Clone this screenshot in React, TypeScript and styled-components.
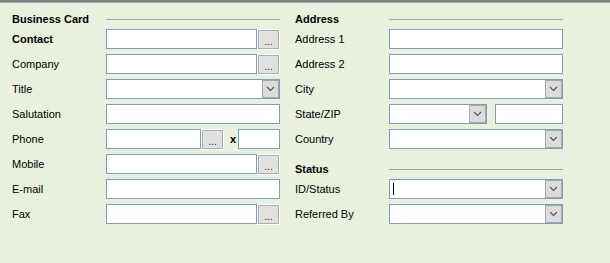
import styled, { createGlobalStyle } from 'styled-components';

const GlobalStyle = createGlobalStyle`
  html, body {
    margin: 0;
    padding: 0;
    background: #e9f0df;
  }
  * {
    box-sizing: border-box;
  }
`;

const Page = styled.div`
  width: 610px;
  height: 263px;
  background: #e9f0df;
  border-top: 2px solid #7c7c7c;
  box-shadow: inset 0 1px 0 #a8a8a8;
  display: flex;
  gap: 15px;
  padding: 7px 0 0 12px;
  font-family: 'Liberation Sans', Arial, sans-serif;
  font-size: 11px;
  color: #000;
`;

const Column = styled.div`
  display: flex;
  flex-direction: column;
  width: 268px;
`;

const Header = styled.div<{ $top?: number }>`
  display: flex;
  align-items: center;
  height: 20px;
  margin-top: ${(p) => p.$top ?? 0}px;
`;

const HeaderTitle = styled.div`
  width: 94px;
  font-weight: bold;
`;

const Rule = styled.div`
  flex: 1;
  height: 1px;
  background: #a2a59c;
`;

const Row = styled.div`
  display: flex;
  align-items: center;
  height: 20px;
  margin-bottom: 5px;
`;

const Label = styled.div<{ $bold?: boolean }>`
  width: 94px;
  font-weight: ${(p) => (p.$bold ? 'bold' : 'normal')};
`;

const Field = styled.div<{ $w?: number; $gap?: number }>`
  position: relative;
  display: flex;
  align-items: center;
  height: 20px;
  width: ${(p) => (p.$w ? `${p.$w}px` : 'auto')};
  flex: ${(p) => (p.$w ? 'none' : '1')};
  margin-left: ${(p) => p.$gap ?? 0}px;
  background: #fff;
  border: 1px solid #7f9db9;
`;

const DotsButton = styled.div`
  width: 23px;
  height: 21px;
  margin-top: 1px;
  border: 1px solid #fff;
  display: flex;
`;

const DotsFace = styled.div`
  flex: 1;
  background: #e1e1e1;
  border: 1px solid #adadad;
  display: flex;
  align-items: flex-end;
  justify-content: center;
  font-size: 10px;
  line-height: 13px;
  color: #222;
`;

const DropButton = styled.div`
  position: absolute;
  top: 0;
  right: 0;
  width: 17px;
  height: 18px;
  background: #dcdcdc;
  border: 1px solid #a8a8a8;
  display: flex;
  align-items: center;
  justify-content: center;
`;

const Ext = styled.span`
  font-weight: bold;
  margin: 0 2px 0 6px;
`;

const Caret = styled.span`
  width: 1px;
  height: 12px;
  margin-left: 3px;
  background: #000;
`;

const Chevron = () => (
  <svg width="9" height="6" viewBox="0 0 9 6">
    <path d="M1 1 L4.5 4.5 L8 1" fill="none" stroke="#555" strokeWidth="1.2" />
  </svg>
);

const Dots = () => (
  <DotsButton>
    <DotsFace>...</DotsFace>
  </DotsButton>
);

const Select = ({ w, children }: { w?: number; children?: React.ReactNode }) => (
  <Field $w={w}>
    {children}
    <DropButton>
      <Chevron />
    </DropButton>
  </Field>
);

const App = () => (
  <>
    <GlobalStyle />
    <Page>
      <Column>
        <Header>
          <HeaderTitle>Business Card</HeaderTitle>
          <Rule />
        </Header>
        <Row>
          <Label $bold>Contact</Label>
          <Field $w={151} />
          <Dots />
        </Row>
        <Row>
          <Label>Company</Label>
          <Field $w={151} />
          <Dots />
        </Row>
        <Row>
          <Label>Title</Label>
          <Select />
        </Row>
        <Row>
          <Label>Salutation</Label>
          <Field />
        </Row>
        <Row>
          <Label>Phone</Label>
          <Field $w={95} />
          <Dots />
          <Ext>x</Ext>
          <Field />
        </Row>
        <Row>
          <Label>Mobile</Label>
          <Field $w={151} />
          <Dots />
        </Row>
        <Row>
          <Label>E-mail</Label>
          <Field />
        </Row>
        <Row>
          <Label>Fax</Label>
          <Field $w={151} />
          <Dots />
        </Row>
      </Column>
      <Column>
        <Header>
          <HeaderTitle>Address</HeaderTitle>
          <Rule />
        </Header>
        <Row>
          <Label>Address 1</Label>
          <Field />
        </Row>
        <Row>
          <Label>Address 2</Label>
          <Field />
        </Row>
        <Row>
          <Label>City</Label>
          <Select />
        </Row>
        <Row>
          <Label>State/ZIP</Label>
          <Select w={98} />
          <Field $gap={8} />
        </Row>
        <Row>
          <Label>Country</Label>
          <Select />
        </Row>
        <Header $top={5}>
          <HeaderTitle>Status</HeaderTitle>
          <Rule />
        </Header>
        <Row>
          <Label>ID/Status</Label>
          <Select>
            <Caret />
          </Select>
        </Row>
        <Row>
          <Label>Referred By</Label>
          <Select />
        </Row>
      </Column>
    </Page>
  </>
);

export default App;
